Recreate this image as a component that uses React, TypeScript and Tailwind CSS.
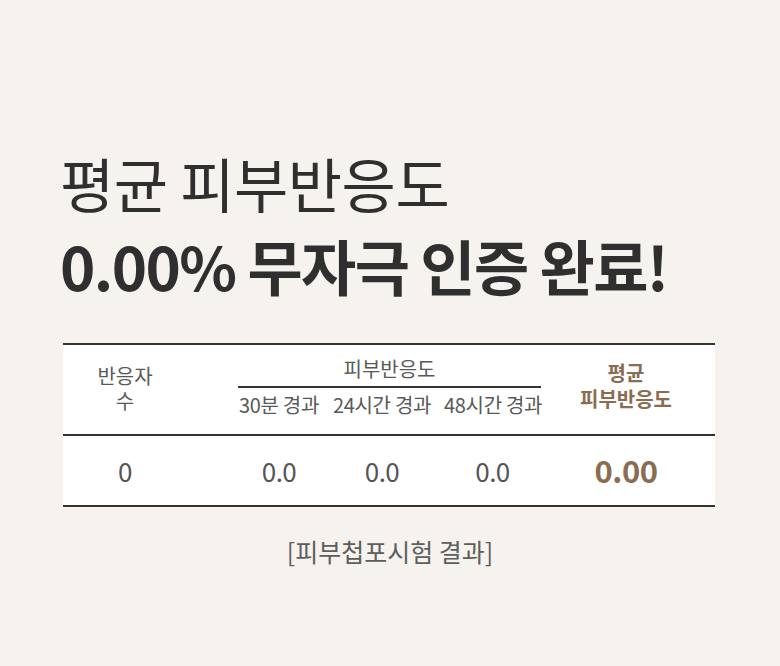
import React from "react";

const font = { fontFamily: '"Noto Sans CJK KR", "Noto Sans", sans-serif' };

export default function App() {
  return (
    <div
      className="w-[780px] h-[666px] bg-[#f6f3ee] overflow-hidden pt-[142px]"
      style={font}
    >
      <div className="pl-[60px] text-[#2f2f2f]">
        <div className="text-[59px] leading-[81px] font-normal tracking-[-0.5px]">
          평균 피부반응도
        </div>
        <div className="text-[60px] leading-[83px] font-bold tracking-[-1.6px]">
          0.00% 무자극 인증 완료!
        </div>
      </div>

      <div className="mt-[37px] ml-[63px] w-[652px] bg-white border-t-2 border-b-2 border-[#333]">
        {/* header */}
        <div className="flex h-[91px] border-b-2 border-[#333] text-[20px] text-[#595959]">
          <div className="w-[124px] flex flex-col justify-center items-center leading-[25px] pb-[4px]">
            <span>반응자</span>
            <span>수</span>
          </div>
          <div className="w-[51px]" />
          <div className="w-[303px] flex flex-col pt-[12px]">
            <div className="text-center leading-[24px]">피부반응도</div>
            <div className="mt-[5px] h-[2px] bg-[#333]" />
            <div className="mt-[5px] flex leading-[24px] tracking-[-0.3px]">
              <div className="w-[82px] text-center whitespace-nowrap">30분 경과</div>
              <div className="w-[124px] text-center whitespace-nowrap">24시간 경과</div>
              <div className="w-[97px] text-center whitespace-nowrap">48시간 경과</div>
            </div>
          </div>
          <div className="w-[170px] flex flex-col justify-center items-center leading-[26px] pb-[8px] font-bold text-[#8a6c50]">
            <span>평균</span>
            <span>피부반응도</span>
          </div>
        </div>
        {/* data */}
        <div className="flex h-[69px] items-center text-[26px] text-[#555] tracking-[-0.5px]">
          <div className="w-[124px] text-center">0</div>
          <div className="w-[51px]" />
          <div className="w-[303px] flex">
            <div className="w-[82px] text-center">0.0</div>
            <div className="w-[124px] text-center">0.0</div>
            <div className="w-[97px] text-center">0.0</div>
          </div>
          <div className="w-[170px] text-center text-[31px] font-bold text-[#8a6c50] tracking-[-0.5px]">
            0.00
          </div>
        </div>
      </div>

      <div className="mt-[29px] text-center text-[25px] leading-[30px] text-[#5e5e5e]">
        [피부첩포시험 결과]
      </div>
    </div>
  );
}
